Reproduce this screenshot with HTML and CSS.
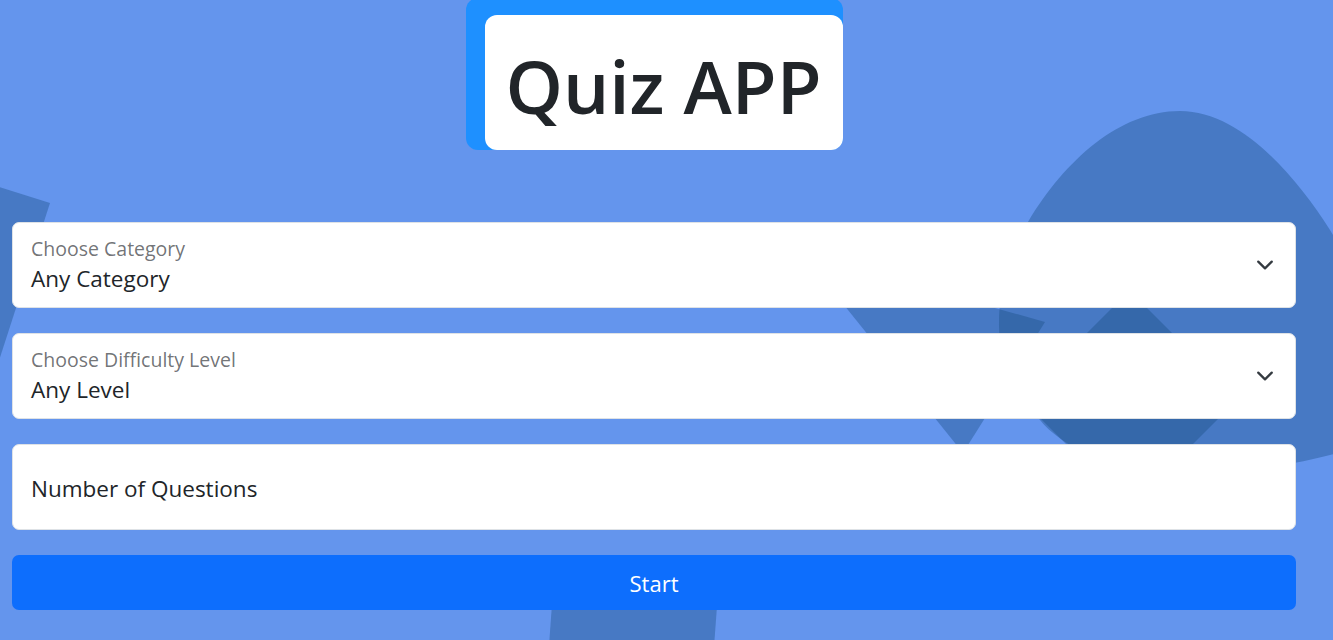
FILE: index.html
```html
<!DOCTYPE html>
<html lang="en">
<head>
<meta charset="utf-8">
<title>Quiz APP</title>
<link rel="stylesheet" href="styles.css">
</head>
<body>
<svg class="bg-shapes" width="1333" height="640" viewBox="0 0 1333 640" aria-hidden="true">
  <g class="shape">
    <polygon points="-150,140 50,203 -30,450 -220,400"/>
    <polygon points="803,254 1045,322 963,453"/>
    <path d="M 1028,222 C 1065,160 1120,111 1180,111 C 1240,111 1295,175 1330,230 C 1360,280 1380,330 1390,380 L 1390,435 C 1340,455 1280,472 1180,472 C 1110,472 1060,445 1040,420 C 1012,388 999,360 999,325 C 999,285 1008,255 1028,222 Z"/>
    <polygon points="1129.5,290.5 1238,399 1129.5,507.5 1021,399"/>
    <polygon points="553,590 718,593 713,660 548,660"/>
  </g>
</svg>
<main class="page">
  <header class="title-wrap">
    <div class="title-card">
      <h1 class="title">Quiz APP</h1>
    </div>
  </header>
  <form class="quiz-form">
    <div class="field">
      <div class="field-text">
        <span class="field-label">Choose Category</span>
        <span class="field-value">Any Category</span>
      </div>
      <svg class="chevron" width="18" height="18" viewBox="0 0 16 16"><path d="M2 5l6 6 6-6" fill="none" stroke="#343a40" stroke-width="2" stroke-linecap="round" stroke-linejoin="round"/></svg>
    </div>
    <div class="field">
      <div class="field-text">
        <span class="field-label">Choose Difficulty Level</span>
        <span class="field-value">Any Level</span>
      </div>
      <svg class="chevron" width="18" height="18" viewBox="0 0 16 16"><path d="M2 5l6 6 6-6" fill="none" stroke="#343a40" stroke-width="2" stroke-linecap="round" stroke-linejoin="round"/></svg>
    </div>
    <div class="field">
      <span class="field-placeholder">Number of Questions</span>
    </div>
    <button type="button" class="start-btn">Start</button>
  </form>
</main>
</body>
</html>
```

FILE: styles.css
```css
* { box-sizing: border-box; }

html, body {
  margin: 0;
  padding: 0;
}

body {
  background: #6495ed;
  font-family: "Open Sans", "Noto Sans", "Liberation Sans", sans-serif;
  color: #212529;
  width: 1333px;
  height: 640px;
  overflow: hidden;
  position: relative;
}

.bg-shapes {
  position: absolute;
  left: 0;
  top: 0;
  z-index: 0;
}

.shape {
  fill: #184b81;
  fill-opacity: 0.38;
}

.page {
  position: relative;
  z-index: 1;
  width: 1308px;
  display: flex;
  flex-direction: column;
  align-items: flex-start;
}

.title-wrap {
  align-self: center;
  margin-top: -2px;
  padding: 17px 0 0 19px;
  background: #1e90ff;
  border-radius: 12px;
}

.title-card {
  width: 358px;
  height: 135px;
  background: #fff;
  border-radius: 12px;
  display: flex;
  align-items: center;
  justify-content: center;
}

.title {
  margin: 0;
  font-size: 73px;
  font-weight: 600;
  line-height: 1;
  color: #212529;
  padding-top: 5px;
}

.quiz-form {
  margin: 72px 12px 0 12px;
  width: 1284px;
  display: flex;
  flex-direction: column;
  gap: 25px;
}

.field {
  height: 86px;
  background: #fff;
  border: 1px solid #dee2e6;
  border-radius: 7px;
  padding: 0 21px 0 18px;
  display: flex;
  align-items: center;
  justify-content: space-between;
}

.field-text {
  display: flex;
  flex-direction: column;
  gap: 4px;
}

.field-label {
  font-size: 19.5px;
  line-height: 24px;
  color: rgba(33, 37, 41, 0.65);
}

.field-value {
  font-size: 22.5px;
  line-height: 28px;
  color: #212529;
}

.field-placeholder {
  font-size: 22.5px;
  line-height: 28px;
  margin-top: 3px;
  color: #212529;
}

.chevron {
  flex: none;
}

.start-btn {
  height: 55px;
  border: none;
  border-radius: 7px;
  background: #0d6efd;
  color: #fff;
  font-family: inherit;
  font-size: 22px;
  cursor: pointer;
}
```
